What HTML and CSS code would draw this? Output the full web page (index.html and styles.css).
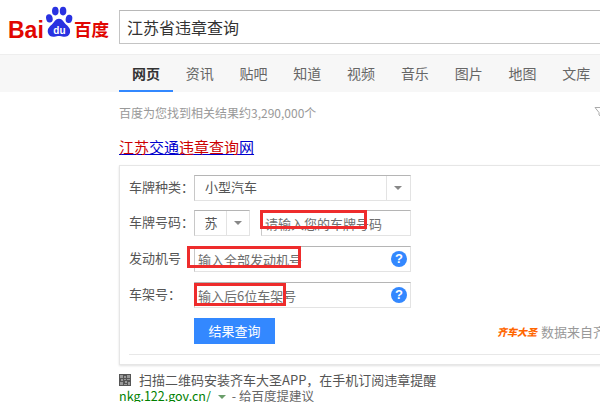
FILE: index.html
```html
<!DOCTYPE html>
<html lang="zh-CN">
<head>
<meta charset="utf-8">
<title>江苏省违章查询</title>
<link rel="stylesheet" href="styles.css">
</head>
<body>
<div class="page">
  <header class="top">
    <div class="logo">
      <span class="logo-bai">Bai</span>
      <svg class="paw" viewBox="0 0 34 36" width="31" height="33" aria-hidden="true">
        <ellipse cx="7" cy="13.5" rx="3.6" ry="4.6" fill="#2932e1" transform="rotate(-12 7 13.5)"/>
        <ellipse cx="13.5" cy="5.5" rx="3.6" ry="4.8" fill="#2932e1"/>
        <ellipse cx="22" cy="5.5" rx="3.6" ry="4.8" fill="#2932e1"/>
        <ellipse cx="28.5" cy="14" rx="3.6" ry="4.6" fill="#2932e1" transform="rotate(12 28.5 14)"/>
        <path d="M17.5 14c-4 0-5 4-8 6.500-3 2.500-5 5-4 9 1 3.500 4.500 4.500 7 4 2-.3 3.500-.8 5-.8s3 .5 5 .8c2.500.5 6-.5 7-4 1-4-1-6.500-4-9-3-2.500-4-6.500-8-6.500z" fill="#2932e1"/>
        <text x="18" y="31" class="paw-text">du</text>
      </svg>
      <span class="logo-cn">百度</span>
    </div>
    <div class="search">江苏省违章查询</div>
  </header>
  <nav class="tabs">
    <a class="tab tab-on">网页</a>
    <a class="tab">资讯</a>
    <a class="tab">贴吧</a>
    <a class="tab">知道</a>
    <a class="tab">视频</a>
    <a class="tab">音乐</a>
    <a class="tab">图片</a>
    <a class="tab">地图</a>
    <a class="tab">文库</a>
  </nav>
  <main class="results">
    <div class="count-row">
      <span>百度为您找到相关结果约3,290,000个</span>
      <svg class="filter" viewBox="0 0 12 12" width="12" height="12" aria-hidden="true"><path d="M1 1.500h10L7 6.500v4L5 9V6.500z" fill="none" stroke="#aaa"/></svg>
    </div>
    <h3 class="title"><em>江苏</em>交通<em>违章查询</em>网</h3>
    <section class="card">
      <div class="row">
        <label class="lbl">车牌种类：</label>
        <div class="field field-wide select">
          <span class="val">小型汽车</span>
          <span class="arrow"></span>
        </div>
      </div>
      <div class="row">
        <label class="lbl">车牌号码：</label>
        <div class="field field-prov select">
          <span class="val val-c">苏</span>
          <span class="arrow arrow-s"></span>
        </div>
        <div class="field field-plate"><span class="ph">请输入您的车牌号码</span></div>
      </div>
      <div class="row">
        <label class="lbl">发动机号</label>
        <div class="field field-wide">
          <span class="ph">输入全部发动机号</span>
          <span class="help">?</span>
        </div>
      </div>
      <div class="row">
        <label class="lbl">车架号：</label>
        <div class="field field-wide">
          <span class="ph">输入后6位车架号</span>
          <span class="help">?</span>
        </div>
      </div>
      <div class="action-row">
        <button class="submit">结果查询</button>
        <div class="source"><span class="brand">齐车大圣</span><span>数据来自齐车大圣</span></div>
      </div>
      <div class="divider"></div>
    </section>
    <p class="desc">
      <svg class="qr" viewBox="0 0 12 12" width="12" height="12" aria-hidden="true">
        <rect width="12" height="12" fill="#555"/>
        <path d="M1 1h3v3H1zM8 1h3v3H8zM1 8h3v3H1zM5 2h2v2H5zM5 5h2v1H5zM2 5h2v2H2zM8 5h3v1H8zM6 7h2v2H6zM9 8h2v3H9zM5 10h3v1H5z" fill="#999"/>
      </svg>
      <span>扫描二维码安装齐车大圣APP，在手机订阅违章提醒</span>
    </p>
    <p class="url"><span class="link">nkg.122.gov.cn/</span><span class="caret"></span><span class="dash">- 给百度提建议</span></p>
  </main>
  <div class="mark mark-plate"></div>
  <div class="mark mark-engine"></div>
  <div class="mark mark-frame"></div>
</div>
</body>
</html>
```
FILE: styles.css
```css
* { box-sizing: border-box; }
html, body { margin: 0; padding: 0; background: #fff; }
body { font-family: "Noto Sans CJK SC", "Liberation Sans", sans-serif; }
.page { position: relative; width: 600px; height: 402px; overflow: hidden; }

.top { display: flex; height: 54px; padding: 10px 0 0 8px; }
.logo { display: flex; align-items: flex-start; width: 111px; height: 34px; color: #e10601; flex: none; margin-top: -4px; }
.logo-bai { width: 35px; font: 700 23px/24px "Liberation Sans", sans-serif; margin-top: 12px; }
.paw { flex: none; }
.paw-text { font: 700 11px "Liberation Sans", sans-serif; fill: #fff; text-anchor: middle; }
.logo-cn { font: 700 17.500px/22px "Noto Sans CJK SC", sans-serif; margin: 12px 0 0 0; white-space: nowrap; }
.search { flex: none; width: 520px; height: 34px; border: 1px solid #c4c4c4; border-top-color: #b8b8b8; border-right: 0; padding-left: 7px; font-size: 16px; line-height: 32px; color: #333; }

.tabs { display: flex; height: 38px; padding-left: 119px; background: #f7f7f7; border-top: 1px solid #eee; }
.tab { flex: none; width: 53.8px; text-align: center; font-size: 14px; line-height: 36px; color: #666; }
.tab-on { color: #333; font-weight: 700; border-bottom: 2px solid #38f; }

.results { padding-left: 119px; }
.count-row { display: flex; justify-content: space-between; width: 487px; height: 17px; margin-top: 12px; font-size: 12px; line-height: 17px; color: #999; }
.filter { margin-top: 2px; }
.title { margin: 16px 0 0; height: 19px; font-size: 15px; line-height: 19px; font-weight: 400; color: #00c; text-decoration: underline; white-space: nowrap; }
.title em { font-style: normal; color: #c00; }

.card { width: 500px; height: 200px; margin-top: 9px; padding: 9px 0 0 9px; border: 1px solid #e6e6e6; box-shadow: 0 1px 2px rgba(0,0,0,.12); }
.row { display: flex; height: 26px; margin-bottom: 10px; }
.row:first-child { margin-bottom: 9px; }
.lbl { flex: none; width: 65px; font-size: 13px; line-height: 24px; color: #555; white-space: nowrap; }
.field { position: relative; display: flex; align-items: center; height: 26px; padding-bottom: 2px; border: 1px solid #e3e3e3; border-top-color: #b5b5b5; border-left-color: #c8c8c8; font-size: 13px; color: #555; }
.field-wide { width: 217px; }
.field-prov { width: 56px; margin-right: 11px; }
.field-plate { width: 150px; }
.val { padding-left: 10px; line-height: 22px; }
.val-c { width: 32px; padding-left: 0; margin-top: 2px; text-align: center; }
.arrow { position: absolute; right: 0; top: 0; width: 24px; height: 24px; border-left: 1px solid #e3e3e3; }
.arrow::after { content: ""; position: absolute; left: 7px; top: 10px; border: 4px solid transparent; border-top: 4px solid #888; border-bottom: 0; }
.arrow-s { width: 23px; }
.ph { padding-left: 3px; margin-top: 3px; line-height: 20px; color: #6e6e6e; white-space: nowrap; }
.help { position: absolute; right: 3px; top: 4px; width: 16px; height: 16px; border-radius: 50%; background: #38f; color: #fff; font: 700 13px/16px "Liberation Sans", sans-serif; text-align: center; }

.action-row { position: relative; display: flex; height: 26px; padding-left: 65px; }
.submit { flex: none; width: 81px; height: 26px; border: 0; padding: 0; background: #38f; color: #fff; font: 13px/24px "Noto Sans CJK SC", sans-serif; }
.source { flex: none; display: flex; align-items: center; gap: 3px; margin: 3px 0 0 222px; height: 20px; font-size: 13px; color: #999; white-space: nowrap; }
.brand { flex: none; width: 41px; font-size: 10px; font-weight: 900; font-style: italic; color: #f60; white-space: nowrap; }
.divider { height: 1px; margin-top: 10px; width: 480px; background: #e8e8e8; }

.desc { display: flex; align-items: center; gap: 8px; margin: 7px 0 0; height: 16px; font-size: 13px; line-height: 16px; color: #555; white-space: nowrap; }
.qr { flex: none; }
.url { display: flex; align-items: center; margin: 0; height: 16px; font-size: 12.500px; line-height: 16px; white-space: nowrap; }
.link { color: #008000; }
.caret { width: 0; height: 0; margin: 2px 6px 0 7px; border: 4px solid transparent; border-top: 4px solid #6a9e6a; border-bottom: 0; }
.dash { color: #666; }

.mark { position: absolute; border: 3px solid #ee2c2c; }
.mark-plate { left: 260px; top: 210px; width: 107px; height: 19px; }
.mark-engine { left: 187px; top: 246px; width: 114px; height: 22px; }
.mark-frame { left: 194px; top: 283px; width: 92px; height: 23px; }
```
